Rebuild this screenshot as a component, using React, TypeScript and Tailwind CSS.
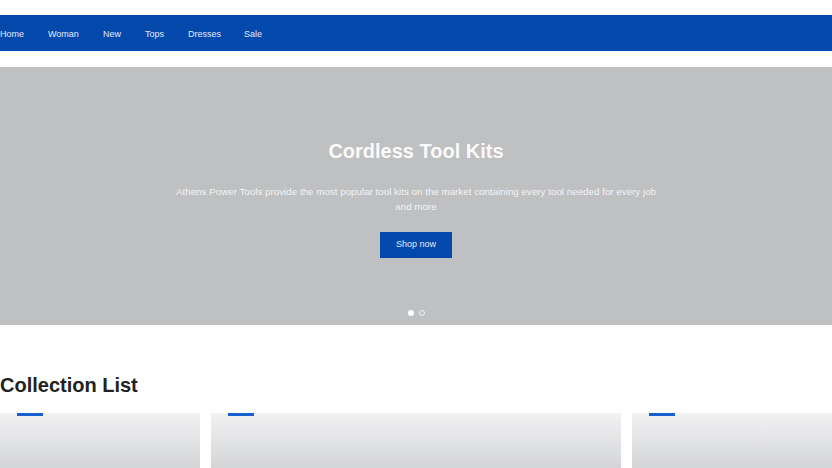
function Card({ className }: { className: string }) {
  return (
    <div className={`relative h-[55px] bg-gradient-to-b from-[#f2f2f3] to-[#d4d5d7] ${className}`}>
      <div className="absolute left-[17px] top-0 h-[3px] w-[26px] bg-[#1a5fd0]" />
    </div>
  );
}

export default function App() {
  return (
    <div className="h-[468px] w-[832px] overflow-hidden bg-white font-['Liberation_Sans',Arial,sans-serif]">
      <div className="h-[15px]" />
      <nav className="flex h-[36px] items-center bg-[#0348ab] pt-[3px] text-[9px] text-[#e3ebff]">
        <a className="w-[48px]">Home</a>
        <a className="w-[55px]">Woman</a>
        <a className="w-[42px]">New</a>
        <a className="w-[43px]">Tops</a>
        <a className="w-[56px]">Dresses</a>
        <a>Sale</a>
      </nav>
      <div className="h-[16px]" />
      <section className="flex h-[258px] flex-col items-center bg-[#bfc0c2] pt-[72px]">
        <h1 className="text-[20px] font-bold leading-[24px] text-white/95">Cordless Tool Kits</h1>
        <p className="mt-[21px] w-[490px] text-center text-[9.8px] leading-[15px] text-[#f3f3f4]">
          Athens Power Tools provide the most popular tool kits on the market containing every tool needed for every job
          and more
        </p>
        <button className="mt-[18px] h-[26px] w-[72px] bg-[#0348ab] text-[9px] text-[#e3ebff]">Shop now</button>
        <div className="mt-[52px] flex gap-[5px]">
          <span className="h-[6px] w-[6px] rounded-full bg-white" />
          <span className="h-[6px] w-[6px] rounded-full border border-white/80" />
        </div>
      </section>
      <h2 className="mt-[48px] text-[20px] font-bold leading-[24px] text-[#222]">Collection List</h2>
      <div className="mt-[16px] flex gap-[11px]">
        <Card className="w-[200px]" />
        <Card className="w-[410px]" />
        <Card className="w-[200px]" />
      </div>
    </div>
  );
}
